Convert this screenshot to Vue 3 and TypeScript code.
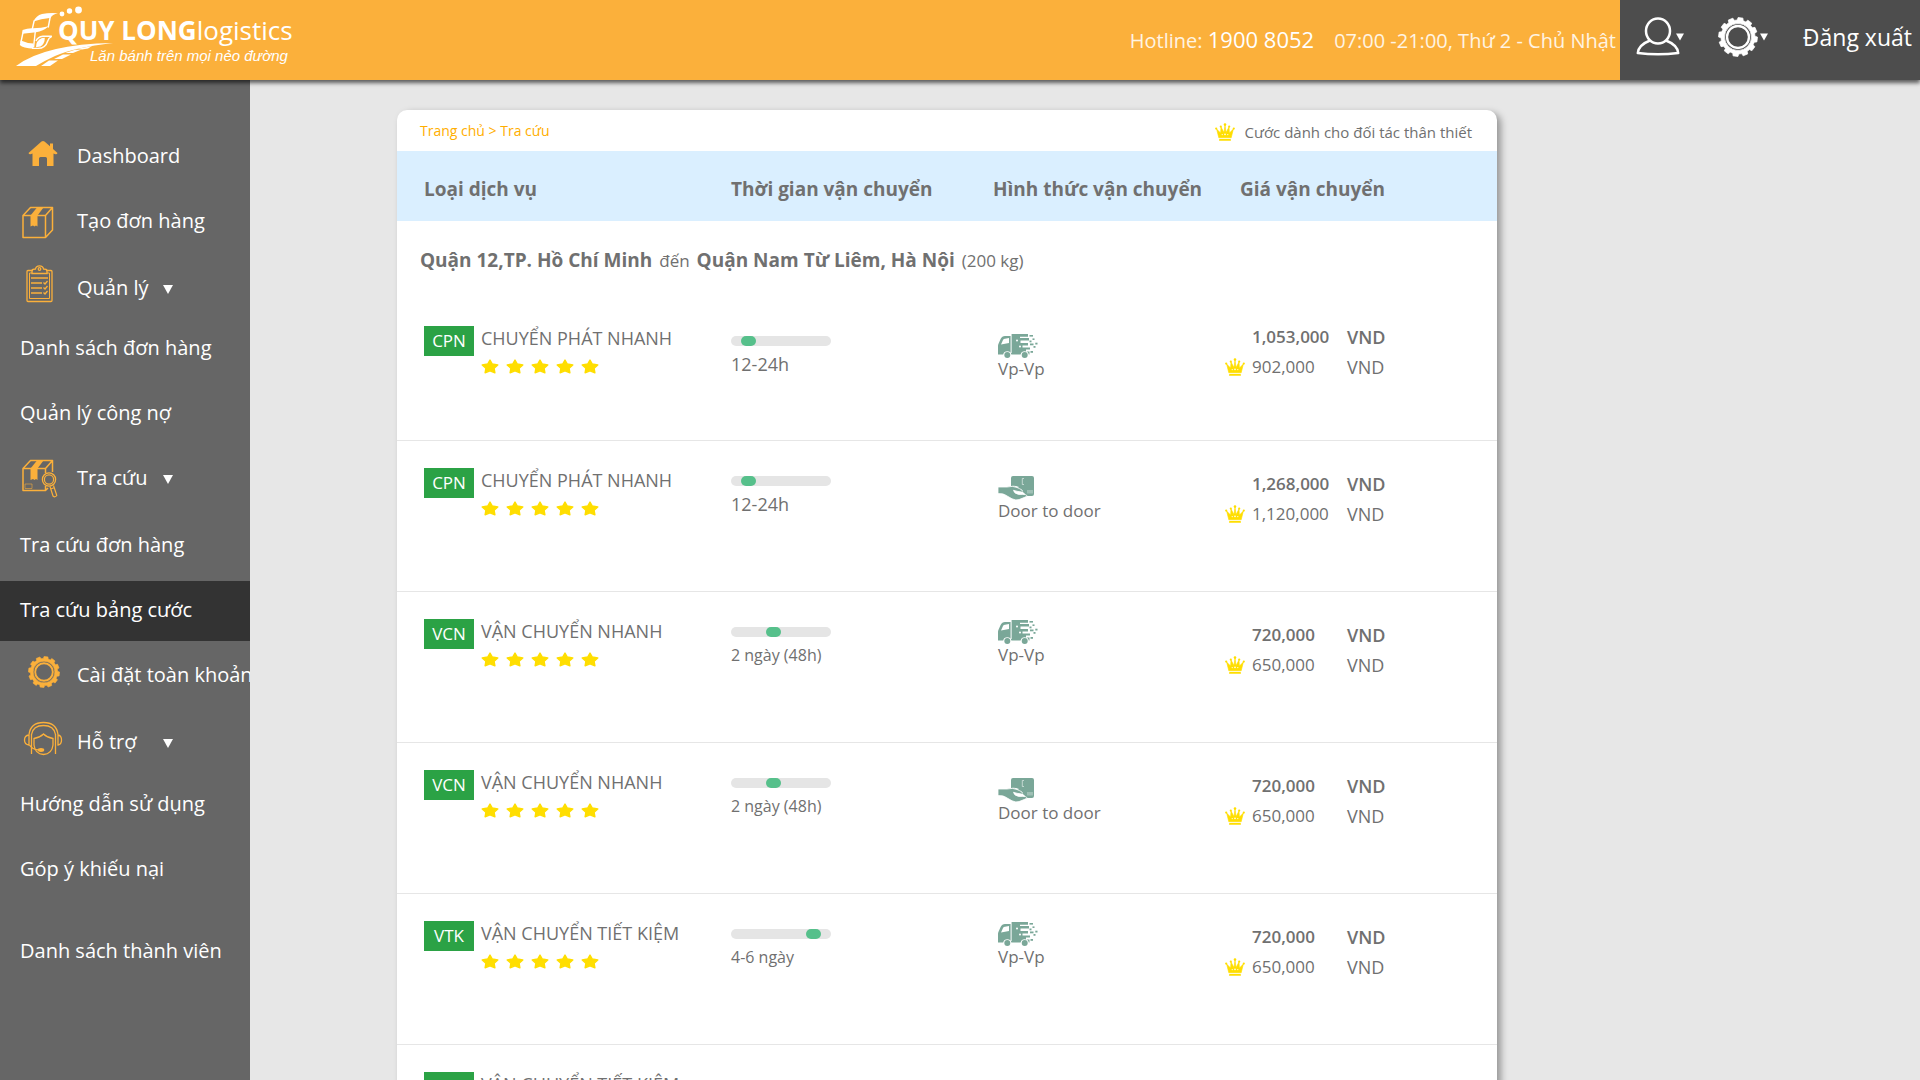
<script setup lang="ts">
type Gap = 'normal' | 'tight' | 'snug' | 'wide' | 'section'
type NavIcon = 'home' | 'box' | 'list' | 'search' | 'gear' | 'support'

interface NavItem {
  label: string
  icon?: NavIcon
  expandable?: boolean
  active?: boolean
  gap: Gap
}

interface Rate {
  code: string
  name: string
  duration: string
  compact: boolean
  progress: number
  method: 'truck' | 'door'
  price: string
  partnerPrice: string
}

const nav: NavItem[] = [
  { label: 'Dashboard', icon: 'home', gap: 'tight' },
  { label: 'Tạo đơn hàng', icon: 'box', gap: 'normal' },
  { label: 'Quản lý', icon: 'list', expandable: true, gap: 'wide' },
  { label: 'Danh sách đơn hàng', gap: 'tight' },
  { label: 'Quản lý công nợ', gap: 'normal' },
  { label: 'Tra cứu', icon: 'search', expandable: true, gap: 'normal' },
  { label: 'Tra cứu đơn hàng', gap: 'wide' },
  { label: 'Tra cứu bảng cước', active: true, gap: 'normal' },
  { label: 'Cài đặt toàn khoản', icon: 'gear', gap: 'normal' },
  { label: 'Hỗ trợ', icon: 'support', expandable: true, gap: 'wide' },
  { label: 'Hướng dẫn sử dụng', gap: 'snug' },
  { label: 'Góp ý khiếu nại', gap: 'normal' },
  { label: 'Danh sách thành viên', gap: 'section' },
]

const rates: Rate[] = [
  { code: 'CPN', name: 'CHUYỂN PHÁT NHANH', duration: '12-24h', compact: false, progress: 10, method: 'truck', price: '1,053,000', partnerPrice: '902,000' },
  { code: 'CPN', name: 'CHUYỂN PHÁT NHANH', duration: '12-24h', compact: false, progress: 10, method: 'door', price: '1,268,000', partnerPrice: '1,120,000' },
  { code: 'VCN', name: 'VẬN CHUYỂN NHANH', duration: '2 ngày (48h)', compact: true, progress: 35, method: 'truck', price: '720,000', partnerPrice: '650,000' },
  { code: 'VCN', name: 'VẬN CHUYỂN NHANH', duration: '2 ngày (48h)', compact: true, progress: 35, method: 'door', price: '720,000', partnerPrice: '650,000' },
  { code: 'VTK', name: 'VẬN CHUYỂN TIẾT KIỆM', duration: '4-6 ngày', compact: true, progress: 75, method: 'truck', price: '720,000', partnerPrice: '650,000' },
  { code: 'VTK', name: 'VẬN CHUYỂN TIẾT KIỆM', duration: '4-6 ngày', compact: true, progress: 75, method: 'door', price: '720,000', partnerPrice: '650,000' },
]

const methodLabel = { truck: 'Vp-Vp', door: 'Door to door' }

// Toothed rim centred on the origin, with a round hole cut out of it.
function gearRim(outer: number, root: number, hole: number, teeth: number): string {
  const step = (Math.PI * 2) / teeth
  const at = (r: number, a: number) => `${(r * Math.cos(a)).toFixed(2)} ${(r * Math.sin(a)).toFixed(2)}`
  let d = ''
  for (let i = 0; i < teeth; i++) {
    const a = i * step - Math.PI / 2 + step / 4
    d += `${i ? 'L' : 'M'}${at(root, a - step * 0.34)}L${at(outer, a - step * 0.24)}L${at(outer, a + step * 0.24)}L${at(root, a + step * 0.34)}`
  }
  return `${d}ZM${hole} 0A${hole} ${hole} 0 1 0 ${-hole} 0A${hole} ${hole} 0 1 0 ${hole} 0Z`
}

const rim = gearRim(15.6, 13.6, 10.8, 12)
</script>

<template>
  <div class="page">
    <svg class="sprite" aria-hidden="true">
      <symbol id="gear" viewBox="-16 -16 32 32">
        <path :d="rim" fill="currentColor" fill-rule="evenodd" stroke="currentColor" stroke-width="0.6" stroke-linejoin="round" />
        <circle r="8.8" fill="none" stroke="currentColor" stroke-width="1.9" />
      </symbol>
      <symbol id="caret" viewBox="0 0 10 9">
        <path d="M0 0H10L5 9Z" fill="currentColor" />
      </symbol>
      <symbol id="star" viewBox="0 0 18 15">
        <path d="M9 1L11.3 5L16.8 5.9L13.1 9.2L13.9 13.8L9 11.8L4.1 13.8L4.9 9.2L1.2 5.9L6.7 5Z" fill="#ffde00" stroke="#ffde00" stroke-width="1.4" stroke-linejoin="round" />
      </symbol>
      <symbol id="crown" viewBox="0 0 20 18">
        <g fill="#ffde00">
          <path d="M1.6 6L5.6 10L6 4L9 9.6L10 2L11 9.6L14 4L14.4 10L18.4 6L16.2 14.8H3.8Z" stroke="#ffde00" stroke-width="0.6" />
          <rect x="4" y="16" width="12" height="1.8" rx="0.9" />
          <circle cx="10" cy="1.6" r="1.3" />
          <circle cx="5.8" cy="3.6" r="1.1" />
          <circle cx="14.2" cy="3.6" r="1.1" />
          <circle cx="1.2" cy="5.6" r="1.1" />
          <circle cx="18.8" cy="5.6" r="1.1" />
        </g>
        <g fill="#fff">
          <circle cx="7.2" cy="11.6" r="0.6" />
          <circle cx="10" cy="11.4" r="0.8" />
          <circle cx="12.8" cy="11.6" r="0.6" />
        </g>
      </symbol>
      <symbol id="truck" viewBox="0 0 40 24">
        <g fill="#7aa798">
          <path d="M12 2H7Q4 2 2.600 5L.4 10Q0 11 0 12V20.500H5.200A4.200 4.200 0 0 1 13.400 20.500H22.600A4.200 4.200 0 0 1 30.800 20.500H31.500V17.500H28V15.500H32V13.500H24.500V11.500H30V9H22.500V6.500H31V4H22V2.800H30V0H13.600V19H12.600V2Z" />
          <circle cx="9.300" cy="21" r="3" />
          <circle cx="26.700" cy="21" r="3" />
          <rect x="31.500" y="1" width="3.500" height="1.600" />
          <rect x="31.500" y="6.500" width="2" height="1.800" />
          <rect x="34.500" y="4.400" width="2" height="1.600" />
          <rect x="32" y="9.500" width="3.500" height="1.800" />
          <rect x="37.300" y="8.700" width="2.200" height="1.800" />
          <rect x="35.500" y="12" width="2" height="1.800" />
          <rect x="32.500" y="17" width="2.500" height="1.800" />
        </g>
        <g fill="#fff">
          <path d="M3 10.500L5 6Q5.600 4.800 7 4.700L11 4V9Z" />
          <circle cx="19" cy="6.500" r="1" />
          <circle cx="22" cy="12.500" r="1" />
        </g>
      </symbol>
      <symbol id="door" viewBox="0 0 36 24">
        <path d="M15 0H34Q36 0 36 2V18Q36 20 34 20H28Q27 16.500 24 15.500L17 13Q20 12 21 11Q17 9 13 10V2Q13 0 15 0Z" fill="#7aa798" />
        <path d="M0 11H9Q15 9.500 19 11.500Q21.500 12.500 24 14Q25 15.500 23.600 16Q19 15.500 15.500 14.300Q16 17.500 20.500 18.400Q25 18.300 27.500 18.600Q30 19.500 28 20.800L21 23.600Q17.500 24.600 14 22.800L6.500 18.500Q5 17.600 0 17.600Z" fill="#7aa798" stroke="#fff" stroke-width="0.800" />
        <path d="M26 2.500H24.300V8.500H26M30 14V17.500M32 14V17.500M34 14V17.500" fill="none" stroke="#d5e4df" stroke-width="0.800" />
      </symbol>
    </svg>

    <header class="topbar">
      <a class="logo" href="#">
        <svg class="logo-mark" viewBox="0 0 120 70" width="120" height="70" aria-hidden="true">
          <g fill="#fff">
            <circle cx="62" cy="14" r="2.400" />
            <circle cx="69.500" cy="11" r="2.700" />
            <circle cx="78.500" cy="10" r="3.400" />
            <path d="M33.500 21.500Q36 15.500 42 14Q49 12.600 58 13.200Q52 14.500 50.800 17.600L49.500 18Q41 18.500 33.500 21.500Z" />
            <path d="M22.500 30Q28 28 33 28.300Q41 28.300 48.800 26.300Q43 31.300 36 32.300L22.500 33.800Z" />
            <path d="M20.800 40.500Q26 43 33.500 43.500V48.800Q23 48.300 19.800 45Z" />
            <path d="M36 47.200Q36 40.500 42 38L44.800 37.800Q44.800 44 40.500 46.400Z" />
            <path d="M16 66Q45 44 113 43Q74 47.500 55 56Q44 61 36 66Z" />
            <path d="M41 66L49 60.500H58L50 66ZM54 59L63 54.500H71L62 59ZM65 53L75 49.800H81L73 53ZM77 49L92 46L88 48.500L82 49.500Z" />
          </g>
          <path d="M50.300 16.500L48.200 27.500M34.200 20.500L32.300 29M23.200 31.500L20.800 43M35.300 31.500L33.600 47M36 41Q37.500 37 43 36.300H51.800Q48.500 37.800 47.500 41.500Q45.500 48.300 38 48.400H32" fill="none" stroke="#fff" stroke-width="1.400" />
        </svg>
        <span class="logo-text">
          <span class="logo-name"><b>QUY LONG</b>logistics</span>
          <em class="slogan">Lăn bánh trên mọi nẻo đường</em>
        </span>
      </a>
      <p class="hotline">
        <span>Hotline: <span class="phone">1900 8052</span></span>
        <span>07:00 -21:00, Thứ 2 - Chủ Nhật</span>
      </p>
      <div class="account">
        <button class="icon-button" type="button" aria-label="Tài khoản">
          <svg width="44" height="40" viewBox="0 0 44 40" fill="none" stroke="#fff" stroke-width="2.500" aria-hidden="true">
            <ellipse cx="22" cy="14" rx="12" ry="12.500" />
            <path d="M14 23.500Q2.500 28 1.800 36Q22 38.400 42.200 36Q41.500 28 30 23.500" stroke-linejoin="round" />
          </svg>
          <svg class="mini-caret" aria-hidden="true"><use href="#caret" /></svg>
        </button>
        <button class="icon-button" type="button" aria-label="Cài đặt">
          <svg width="46" height="40" aria-hidden="true"><use href="#gear" width="40" height="40" /></svg>
          <svg class="mini-caret" aria-hidden="true"><use href="#caret" /></svg>
        </button>
        <a class="logout" href="#">Đăng xuất</a>
      </div>
    </header>

    <div class="body">
      <nav class="sidebar">
        <component
          :is="item.expandable ? 'button' : 'a'"
          v-for="item in nav"
          :key="item.label"
          :class="['nav-item', item.gap, { active: item.active }]"
          :href="item.expandable ? undefined : '#'"
          :type="item.expandable ? 'button' : undefined"
        >
          <svg v-if="item.icon" class="nav-icon" viewBox="0 0 44 44" aria-hidden="true">
            <path v-if="item.icon === 'home'" d="M8.500 20L21.500 8.500Q23 7.500 24.500 8.500L30 13.300V10.500H33V16L37.500 20Q37 21.500 35.500 21.200L33.500 20.500V33H27V25.500Q27 24 25.500 24H20.500Q19 24 19 25.500V33H12.500V20.500L10.500 21.200Q9 21.500 8.500 20Z" fill="currentColor" />
            <g v-else-if="item.icon === 'box'" fill="none" stroke="currentColor" stroke-width="1.500" stroke-linejoin="round">
              <path d="M3 17.500L10.500 9.500H32.500L25.500 17.500ZM3 17.500V39.500H25.500V17.500M25.500 39.500L32.500 32V9.500" />
              <path d="M10.500 17.500L17 9.500H23.500L17.500 17.500V28.500L16 27.500L14.500 28.500L13 27.500L10.500 28.500Z" fill="currentColor" stroke="none" />
            </g>
            <g v-else-if="item.icon === 'list'" fill="none" stroke="currentColor" stroke-width="1.300">
              <path d="M13 5.500H8Q7 5.500 7 6.500V35.500Q7 36.500 8 36.500H31Q32 36.500 32 35.500V6.500Q32 5.500 31 5.500H26" />
              <path d="M12 8H9.500V33.500H29.500V8H27" stroke-width="1" />
              <path d="M12 8.500V5.500Q12.500 4 15.500 4Q16 .800 19.500 .800Q23 .800 23.500 4Q26.500 4 27 5.500V8.500Z" />
              <circle cx="19.500" cy="4" r="1.300" />
              <path d="M11 13H28M11 18H22M11 23H22M11 28H22M23.500 17.500L25 19L27.500 16M23.500 22.500L25 24L27.500 21M23.500 27.500L25 29L27.500 26" />
            </g>
            <g v-else-if="item.icon === 'search'" fill="none" stroke="currentColor" stroke-width="1.500" stroke-linejoin="round">
              <path d="M32.500 17V5.500H10.500L3 13.500V35.500H25.500L28 33M3 13.500H25.500V18M25.500 13.500L32.500 5.500M25.500 31V35.500" />
              <path d="M10.500 13.500L17 5.500H23.500L17.500 13.500V25L16 24L14.500 25L13 24L10.500 25Z" fill="currentColor" stroke="none" />
              <path d="M5 29H12V33.500H5Z" stroke-width="0.800" opacity="0.700" />
              <circle cx="29" cy="24.500" r="6.600" stroke-width="1.300" />
              <circle cx="29" cy="24.500" r="4.600" stroke-width="1.200" />
              <path d="M30 31.500L33 41Q35 42.800 36.800 40.500L33.500 30.500M30.800 34L34.500 32.500" stroke-width="1.200" />
            </g>
            <use v-else-if="item.icon === 'gear'" href="#gear" x="8" y="4" width="32" height="32" />
            <g v-else fill="none" stroke="currentColor" stroke-width="1.300">
              <path d="M9 15.500Q10.500 3.500 23.500 3.500Q36.500 3.500 38 15.500M11.500 15.500Q13 6.500 23.500 6.500Q34 6.500 35.500 15.500" />
              <path d="M9 16Q4.500 16.500 4.500 21Q4.500 25.500 9 26ZM38 16Q41.500 16.500 41.500 21Q41.500 25.500 38 26Z" />
              <path d="M11.500 15V35M35.500 15V35M14 19.500V26Q15 35 23.500 35.500Q32 35 33 26V19.500Q27 18.500 23.500 15Q20 18.500 14 19.500Z" />
              <path d="M9.500 26Q12 30.500 19 31" />
              <ellipse cx="21" cy="31" rx="2.600" ry="1.300" fill="currentColor" />
            </g>
          </svg>
          <span class="nav-label">{{ item.label }}</span>
          <svg v-if="item.expandable" class="caret" aria-hidden="true"><use href="#caret" /></svg>
        </component>
      </nav>

      <main class="content">
        <section class="card">
          <div class="card-top">
            <div class="breadcrumb">
              <a href="#">Trang chủ</a> &gt; <a href="#">Tra cứu</a>
            </div>
            <div class="legend">
              <svg class="crown" aria-hidden="true"><use href="#crown" /></svg>
              <span>Cước dành cho đối tác thân thiết</span>
            </div>
          </div>
          <table class="rates">
            <colgroup>
              <col class="col-service" />
              <col class="col-time" />
              <col class="col-method" />
              <col class="col-price" />
            </colgroup>
            <thead>
              <tr>
                <th scope="col">Loại dịch vụ</th>
                <th scope="col">Thời gian vận chuyển</th>
                <th scope="col">Hình thức vận chuyển</th>
                <th scope="col" class="price-head">Giá vận chuyển</th>
              </tr>
            </thead>
            <tbody class="route">
              <tr>
                <td colspan="4">
                  <div class="route-line">
                    <b>Quận 12,TP. Hồ Chí Minh</b>
                    <span>đến</span>
                    <b>Quận Nam Từ Liêm, Hà Nội</b>
                    <span>(200 kg)</span>
                  </div>
                </td>
              </tr>
            </tbody>
            <tbody class="rows">
              <tr v-for="(rate, index) in rates" :key="index">
                <td>
                  <div class="service">
                    <span class="badge">{{ rate.code }}</span>
                    <div>
                      <div class="name">{{ rate.name }}</div>
                      <div class="stars" role="img" aria-label="5/5">
                        <svg v-for="n in 5" :key="n" class="star"><use href="#star" /></svg>
                      </div>
                    </div>
                  </div>
                </td>
                <td class="time">
                  <div class="track"><span class="thumb" :style="{ marginLeft: rate.progress + '%' }"></span></div>
                  <div :class="['duration', { compact: rate.compact }]">{{ rate.duration }}</div>
                </td>
                <td :class="['method', rate.method]">
                  <svg class="method-icon" aria-hidden="true"><use :href="'#' + rate.method" /></svg>
                  <div>{{ methodLabel[rate.method] }}</div>
                </td>
                <td class="price">
                  <div class="amount list-price"><span></span><span>{{ rate.price }}</span><span class="unit">VND</span></div>
                  <div class="amount">
                    <svg class="crown" aria-hidden="true"><use href="#crown" /></svg>
                    <span>{{ rate.partnerPrice }}</span><span class="unit">VND</span>
                  </div>
                </td>
              </tr>
            </tbody>
          </table>
        </section>
      </main>
    </div>
  </div>
</template>

<style>
body {
  margin: 0;
  background: #e7e7e7;
}
</style>

<style scoped>
* {
  box-sizing: border-box;
}

.page {
  height: 100vh;
  overflow: hidden;
  display: flex;
  flex-direction: column;
  font-family: "Open Sans", "Noto Sans", sans-serif;
  font-size: 17px;
  color: #707070;
  background: #e7e7e7;
}

a {
  color: inherit;
  text-decoration: none;
}

button {
  padding: 0;
  border: 0;
  background: none;
  color: inherit;
  font: inherit;
  text-align: left;
  cursor: pointer;
}

.sprite {
  position: absolute;
  width: 0;
  height: 0;
}

.topbar {
  position: relative;
  z-index: 1;
  flex: none;
  display: flex;
  align-items: center;
  height: 80px;
  background: #fbb03b;
  color: #fff;
  box-shadow: 0 3px 4px rgba(0, 0, 0, 0.6);
}

.logo {
  display: grid;
  align-self: start;
}

.logo-mark,
.logo-text {
  grid-area: 1 / 1;
}

.logo-text {
  display: flex;
  flex-direction: column;
  padding: 12px 0 0 58px;
}

.logo-name {
  font-size: 26px;
  line-height: 36px;
  white-space: nowrap;
}

.slogan {
  padding-left: 32px;
  font-family: "Liberation Sans", Arial, sans-serif;
  font-size: 15px;
  line-height: 16px;
  white-space: nowrap;
}

.hotline {
  display: flex;
  align-items: baseline;
  gap: 20px;
  margin: 0 4px 0 auto;
  padding-bottom: 2px;
  font-size: 20px;
  white-space: nowrap;
  color: #fff4e3;
}

.phone {
  font-size: 22px;
  color: #fff;
}

.account {
  display: flex;
  align-items: center;
  align-self: stretch;
  width: 300px;
  padding: 0 8px 6px 16px;
  background: #4d4d4d;
}

.icon-button {
  display: flex;
  align-items: center;
  margin-right: 34px;
}

.mini-caret {
  width: 8px;
  height: 8px;
  margin-left: -4px;
}

.logout {
  margin-left: auto;
  font-size: 23px;
  white-space: nowrap;
}

.body {
  flex: 1;
  display: flex;
  min-height: 0;
}

.sidebar {
  flex: none;
  display: flex;
  flex-direction: column;
  width: 250px;
  padding-top: 47px;
  overflow: hidden;
  background: #666;
  color: #fff;
  font-size: 20px;
}

.nav-item {
  flex: none;
  display: flex;
  align-items: center;
  height: 60px;
  padding: 0 0 4px 20px;
  white-space: nowrap;
}

.nav-item.snug {
  margin-top: 2px;
}

.nav-item.normal {
  margin-top: 5px;
}

.nav-item.wide {
  margin-top: 7px;
}

.nav-item.section {
  margin-top: 22px;
}

.nav-item.active {
  background: #333;
}

.nav-icon {
  flex: none;
  width: 44px;
  height: 44px;
  margin-right: 13px;
  color: #fbb03b;
}

button .nav-label {
  width: 86px;
}

.caret {
  width: 10px;
  height: 9px;
  margin-top: 4px;
}

.content {
  flex: 1;
  min-width: 0;
  padding: 30px 147px 0;
}

.card {
  max-width: 1100px;
  border-radius: 10px;
  background: #fff;
  box-shadow: 4px 3px 7px rgba(0, 0, 0, 0.35);
}

.card-top {
  display: flex;
  align-items: center;
  justify-content: space-between;
  height: 41px;
  padding: 0 25px 0 23px;
}

.breadcrumb {
  font-size: 14px;
  color: #ffae00;
}

.legend {
  display: flex;
  align-items: center;
  gap: 10px;
  padding-top: 3px;
  font-size: 15px;
}

.crown {
  width: 20px;
  height: 18px;
}

.rates {
  width: 100%;
  table-layout: fixed;
  border-spacing: 0;
}

.col-service {
  width: 334px;
}

.col-time {
  width: 262px;
}

.col-method {
  width: 232px;
}

.col-price {
  width: 272px;
}

th {
  height: 70px;
  padding: 5px 0 0;
  background: #daefff;
  font-size: 19px;
  font-weight: 700;
  text-align: left;
  white-space: nowrap;
}

th:first-child {
  padding-left: 27px;
}

.price-head {
  padding-left: 15px;
}

td {
  padding: 0;
  vertical-align: top;
}

.route td {
  height: 78px;
  padding: 27px 0 0 23px;
}

.route-line {
  display: flex;
  align-items: baseline;
  gap: 7px;
  line-height: 24px;
}

.route b {
  font-size: 19px;
}

.rows td {
  height: 151px;
  padding-top: 27px;
  border-bottom: 1px solid #e6e6e6;
}

.rows tr:first-child td {
  height: 142px;
}

.service {
  display: flex;
  gap: 7px;
  padding-left: 27px;
}

.badge {
  width: 50px;
  height: 30px;
  background: #2ba245;
  color: #fff;
  line-height: 30px;
  text-align: center;
}

.name {
  font-size: 18px;
  font-weight: 500;
  line-height: 24px;
  white-space: nowrap;
}

.stars {
  display: flex;
  gap: 7px;
  margin-top: 9px;
}

.star {
  width: 18px;
  height: 15px;
}

.rows .time {
  padding-top: 35px;
}

.rows tr:first-child .time {
  padding-top: 37px;
}

.track {
  width: 100px;
  height: 10px;
  border-radius: 5px;
  background: #e5e5e5;
}

.thumb {
  display: block;
  width: 15px;
  height: 10px;
  border-radius: 5px;
  background: #56c08b;
}

.duration {
  margin-top: 6px;
  font-size: 18px;
  line-height: 24px;
}

.duration.compact {
  font-size: 16px;
}

.rows .method {
  padding: 28px 0 0 5px;
  line-height: 22px;
}

.rows .method.door,
.rows tr:first-child .method {
  padding-top: 35px;
}

.method-icon {
  display: block;
  width: 40px;
  height: 24px;
}

.door .method-icon {
  width: 36px;
}

.rows .price {
  padding-top: 28px;
}

.rows tr:first-child .price {
  padding-top: 23px;
}

.amount {
  display: grid;
  grid-template-columns: 27px 95px auto;
  align-items: center;
  line-height: 30px;
}

.list-price {
  font-weight: 600;
}

.unit {
  font-size: 18px;
}
</style>
